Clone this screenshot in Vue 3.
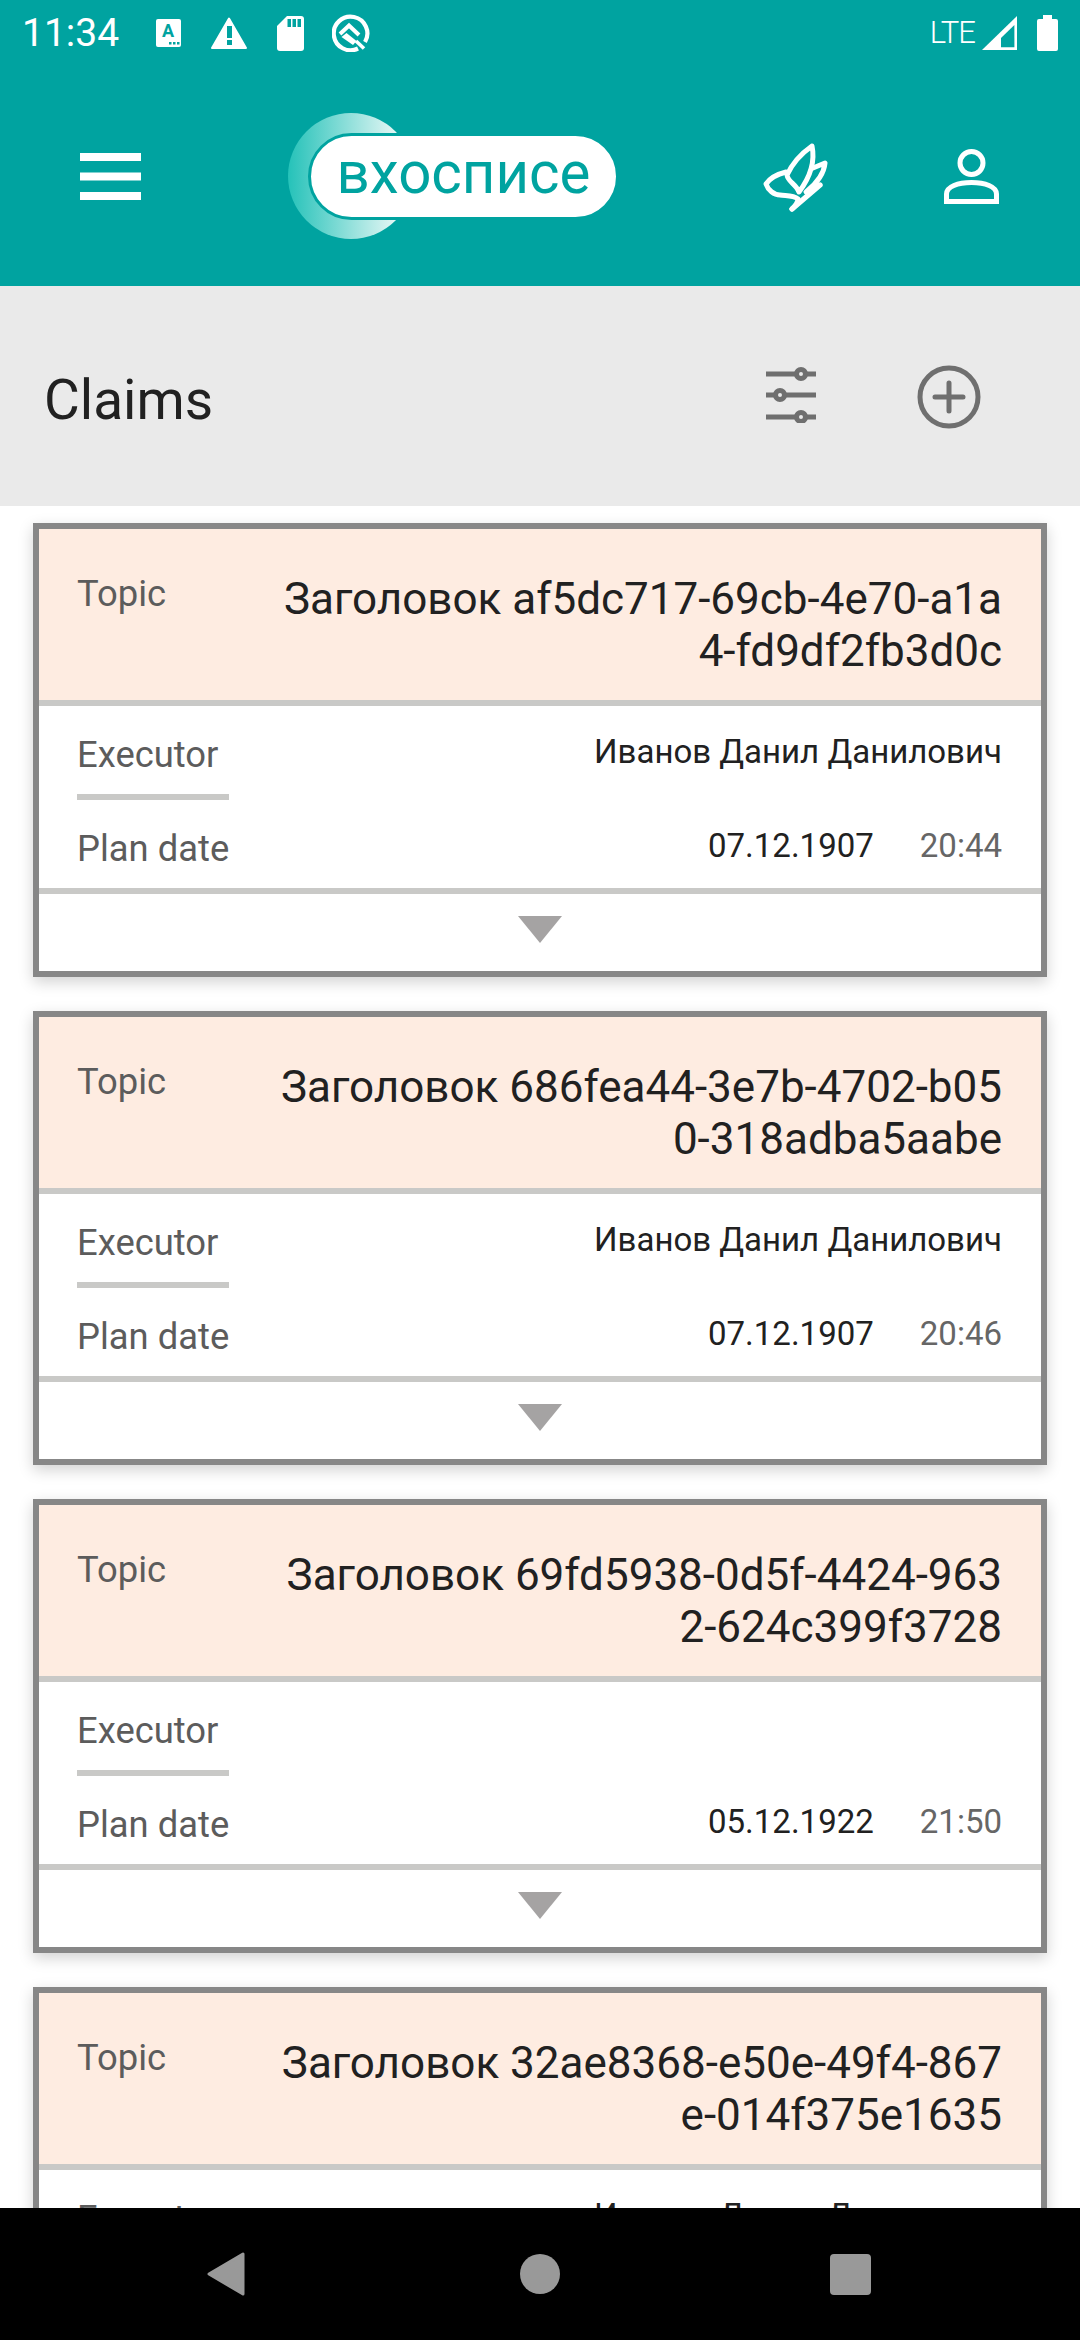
<script setup>
const claims = [
  { lines: ['Заголовок af5dc717-69cb-4e70-a1a', '4-fd9df2fb3d0c'], executor: 'Иванов Данил Данилович', date: '07.12.1907', time: '20:44' },
  { lines: ['Заголовок 686fea44-3e7b-4702-b05', '0-318adba5aabe'], executor: 'Иванов Данил Данилович', date: '07.12.1907', time: '20:46' },
  { lines: ['Заголовок 69fd5938-0d5f-4424-963', '2-624c399f3728'], executor: '', date: '05.12.1922', time: '21:50' },
  { lines: ['Заголовок 32ae8368-e50e-49f4-867', 'e-014f375e1635'], executor: 'Иванов Данил Данилович', date: '07.12.1907', time: '20:44' }
]
</script>

<template>
  <div class="screen">
    <header class="top">
      <div class="status">
        <span class="clock">11:34</span>
        <svg class="st-a" width="25" height="28" viewBox="0 0 25 28">
          <rect width="25" height="28" rx="2" fill="#fff" />
          <text x="12" y="18" text-anchor="middle" class="a-glyph">A</text>
          <rect x="13" y="23" width="2.5" height="2.5" fill="#00a3a0" />
          <rect x="17" y="23" width="2.5" height="2.5" fill="#00a3a0" />
          <rect x="21" y="23" width="2.5" height="2.5" fill="#00a3a0" />
        </svg>
        <svg class="st-w" width="36" height="32" viewBox="0 0 36 32">
          <path d="M18 1.5 L35 31 H1 Z" fill="#fff" stroke="#fff" stroke-width="2" stroke-linejoin="round" />
          <rect x="16" y="9" width="5" height="12" fill="#00a3a0" />
          <rect x="16" y="23" width="5" height="5" fill="#00a3a0" />
        </svg>
        <svg class="st-s" width="27" height="35" viewBox="0 0 27 35">
          <path d="M10 0 H24 a3 3 0 0 1 3 3 V32 a3 3 0 0 1 -3 3 H3 a3 3 0 0 1 -3 -3 V10 Z" fill="#fff" />
          <rect x="10.5" y="3" width="3.5" height="8" fill="#00a3a0" />
          <rect x="15.5" y="3" width="3.5" height="8" fill="#00a3a0" />
          <rect x="20.5" y="3" width="3.5" height="8" fill="#00a3a0" />
        </svg>
        <svg class="st-q" width="38" height="38" viewBox="0 0 38 38">
          <path d="M26 34.5 A16.8 16.8 0 1 1 33 28" fill="none" stroke="#fff" stroke-width="4.2" />
          <path d="M24 27 L32 34.5" fill="none" stroke="#fff" stroke-width="3.6" />
          <path d="M8 20 L17 11.5 L27 21" fill="none" stroke="#fff" stroke-width="4" />
          <path d="M9.5 23 L14.5 19 L24.5 27 L21 31 Z" fill="#fff" />
        </svg>
        <span class="lte">LTE</span>
        <svg class="st-sig" width="35" height="34" viewBox="0 0 35 34">
          <path d="M35 0 V34 H0 Z" fill="#fff" />
          <path d="M32.4 9 V31.2 H19 V22 Z" fill="#00a3a0" />
        </svg>
        <svg class="st-bat" width="21" height="36" viewBox="0 0 21 36">
          <path d="M6 0 H15 V4 H19 a2 2 0 0 1 2 2 V34 a2 2 0 0 1 -2 2 H2 a2 2 0 0 1 -2 -2 V6 a2 2 0 0 1 2 -2 H6 Z" fill="#fff" />
        </svg>
      </div>
      <div class="brand-row">
        <svg class="burger" width="61" height="47" viewBox="0 0 61 47">
          <rect y="0" width="61" height="8" fill="#fff" />
          <rect y="19.5" width="61" height="8" fill="#fff" />
          <rect y="39" width="61" height="8" fill="#fff" />
        </svg>
        <svg class="logo" width="330" height="126" viewBox="0 0 330 126">
          <defs>
            <linearGradient id="crescent" x1="0" y1="0" x2="1" y2="0">
              <stop offset="0" stop-color="#25c2b9" />
              <stop offset="0.85" stop-color="#e2f6f4" />
            </linearGradient>
          </defs>
          <circle cx="63" cy="63" r="63" fill="url(#crescent)" />
          <rect x="21.5" y="21.5" width="308" height="84" rx="42" fill="#fff" stroke="#00a3a0" stroke-width="3" />
          <text x="48.5" y="79.5" class="logo-text" textLength="254" lengthAdjust="spacingAndGlyphs">вхосписе</text>
        </svg>
        <svg class="leaf" width="90" height="90" viewBox="0 0 90 90">
          <g fill="none" stroke="#fff" stroke-width="5" stroke-linecap="round" stroke-linejoin="round">
            <path d="M46 40 C38 42 30 46 26 52 C28 58 34 63 40 63 C46 64 53 63 58 67 C58 71 55 74 52 77" />
            <path d="M72 14 C62 21 53 30 47 43 C48 50 56 52 59 60 C68 48 76 33 72 14 Z" />
            <path d="M73 36 L85 31 C84 42 76 52 66 60" />
            <path d="M80 53 L52 77" stroke-width="5.4" />
          </g>
        </svg>
        <svg class="user" width="55" height="55" viewBox="0 0 55 55">
          <g fill="none" stroke="#fff" stroke-width="5">
            <circle cx="27.5" cy="14" r="11.5" />
            <path d="M2.5 52.5 V45 C2.5 37.5 14 33.5 27.5 33.5 C41 33.5 52.5 37.5 52.5 45 V52.5 Z" />
          </g>
        </svg>
      </div>
    </header>

    <section class="sub">
      <h1 class="title">Claims</h1>
      <svg class="filter" width="50" height="56" viewBox="0 0 50 56">
        <g fill="none" stroke="#6f6f6f" stroke-width="5">
          <path d="M0 7 H29 M41 7 H50" />
          <circle cx="35" cy="7" r="4.5" />
          <path d="M0 28 H8 M20 28 H50" />
          <circle cx="14" cy="28" r="4.5" />
          <path d="M0 50 H29 M41 50 H50" />
          <circle cx="35" cy="50" r="4.5" />
        </g>
      </svg>
      <svg class="plus" width="64" height="64" viewBox="0 0 64 64">
        <g fill="none" stroke="#6f6f6f" stroke-width="5" stroke-linecap="round">
          <circle cx="32" cy="32" r="29" />
          <path d="M18 32 H46 M32 18 V46" />
        </g>
      </svg>
    </section>

    <main class="list">
      <article v-for="c in claims" :key="c.lines[0]" class="card">
        <div class="head">
          <span class="label">Topic</span>
          <div class="topic">
            <div v-for="l in c.lines" :key="l">{{ l }}</div>
          </div>
        </div>
        <div class="body">
          <div class="row">
            <span class="label under">Executor</span>
            <span class="value">{{ c.executor }}</span>
          </div>
          <div class="row second">
            <span class="label">Plan date</span>
            <span class="value">{{ c.date }}<span class="time">{{ c.time }}</span></span>
          </div>
        </div>
        <div class="foot"><i class="arrow"></i></div>
      </article>
    </main>

    <nav class="nav">
      <svg class="n-back" width="38" height="44" viewBox="0 0 38 44">
        <path d="M36 2 V42 L2 22 Z" fill="#999" stroke="#999" stroke-width="3" stroke-linejoin="round" />
      </svg>
      <svg class="n-home" width="40" height="40" viewBox="0 0 40 40"><circle cx="20" cy="20" r="20" fill="#999" /></svg>
      <svg class="n-rec" width="41" height="41" viewBox="0 0 41 41"><rect width="41" height="41" rx="4" fill="#999" /></svg>
    </nav>
  </div>
</template>

<style scoped>
.screen {
  width: 1080px;
  height: 2340px;
  display: flex;
  flex-direction: column;
  overflow: hidden;
  background: #fff;
  font-family: Roboto, sans-serif;
}
.top { background: #00a3a0; height: 286px; flex: none; }
.status { height: 66px; display: flex; align-items: center; padding: 0 22px 0 22px; color: #fff; }
.clock { font-size: 39px; line-height: 66px; width: 97px; }
.st-a { margin-left: 37px; }
.st-w { margin-left: 30px; }
.st-s { margin-left: 30px; }
.st-q { margin-left: 28px; }
.lte { margin-left: auto; font-size: 31px; font-weight: 300; letter-spacing: -1px; line-height: 66px; }
.st-sig { margin-left: 7px; }
.st-bat { margin-left: 20px; }
.a-glyph { font: 700 18px Roboto, sans-serif; fill: #00a3a0; }
.brand-row { height: 220px; display: flex; align-items: center; padding-left: 80px; }
.logo { margin-left: 147px; }
.logo-text { font-family: Roboto, sans-serif; font-size: 60px; fill: #00a3a0; }
.leaf { margin-left: 122px; margin-top: 2px; }
.user { margin-left: 114px; margin-top: 1px; }

.sub { height: 220px; flex: none; background: #eaeaea; display: flex; align-items: center; padding-left: 44px; }
.title { margin: 7px 0 0; font-size: 55px; font-weight: 400; color: #212121; line-height: 64px; flex: 1; }
.filter { margin-top: -2px; }
.plus { margin: 2px 99px 0 101px; }

.list { flex: 1; min-height: 0; overflow: hidden; padding: 17px 33px 0; display: flex; flex-direction: column; gap: 34px; }
.card { flex: none; border: 6px solid #878787; box-shadow: 0 5px 14px rgba(0, 0, 0, 0.18); background: #fff; }
.head { height: 171px; box-sizing: border-box; background: #feece1; padding: 44px 39px 0 38px; display: flex; justify-content: space-between; align-items: flex-start; }
.topic { font-size: 44px; line-height: 52px; color: #212121; text-align: right; }
.label { font-size: 36.4px; line-height: 42px; color: #5c5c5c; display: block; }
.body { border-top: 6px solid #c9c9c7; border-bottom: 6px solid #c9c9c7; padding: 28px 39px 18px 38px; }
.row { display: flex; justify-content: space-between; align-items: flex-start; }
.second { margin-top: 28px; }
.under { width: 152px; padding-bottom: 18px; border-bottom: 6px solid #c9c9c7; }
.value { font-size: 33px; line-height: 40px; color: #212121; margin-top: -2px; }
.time { margin-left: 46px; color: #666; }
.foot { height: 77px; box-sizing: border-box; padding-top: 22px; display: flex; justify-content: center; align-items: flex-start; }
.arrow { width: 0; height: 0; border-left: 22px solid transparent; border-right: 22px solid transparent; border-top: 27px solid #a5a3a3; }

.nav { height: 132px; flex: none; background: #000; display: flex; align-items: center; padding-left: 207px; }
.n-home { margin-left: 275px; }
.n-rec { margin-left: 270px; }
</style>

<style>
html, body { margin: 0; padding: 0; }
</style>
